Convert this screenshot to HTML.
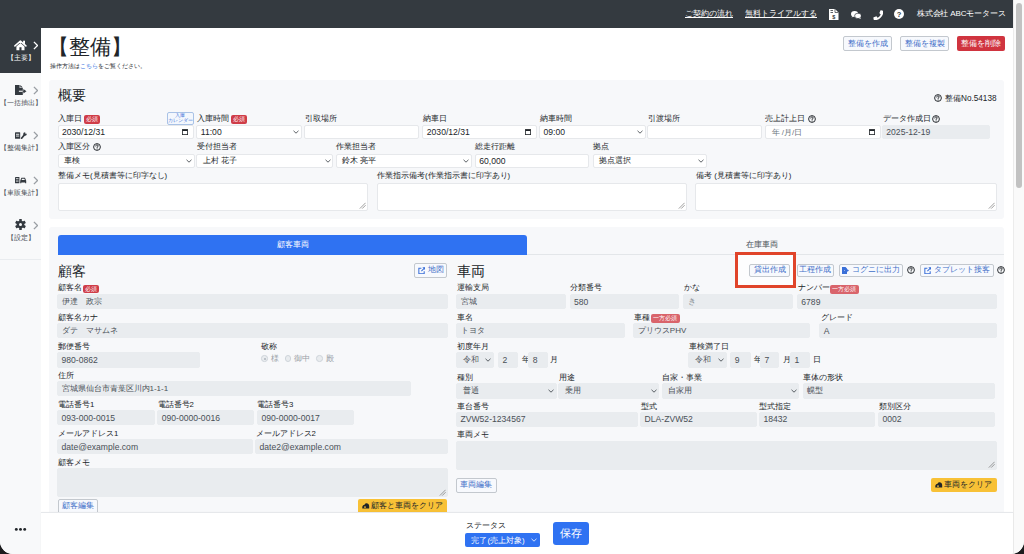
<!DOCTYPE html><html><head><meta charset="utf-8"><style>
*{box-sizing:border-box;margin:0;padding:0}
html,body{width:1024px;height:554px;overflow:hidden;background:#1c1c1e}
body{font-family:"Liberation Sans",sans-serif;color:#212529;position:relative}
#win{position:absolute;left:0;top:0;width:1024px;height:554px;background:#fff;overflow:hidden;border-radius:0 0 13px 13px}
.a{position:absolute}
.lbl{position:absolute;font-size:7.8px;line-height:8px;white-space:nowrap;color:#212529}
.inp{position:absolute;background:#fff;border:0.8px solid #e6e8eb;border-radius:2px;font-size:8.6px;color:#212529;padding-left:3.5px;display:flex;align-items:center;white-space:nowrap;overflow:hidden}
.dis{background:#e9ecef;border-color:#e9ecef;color:#495057}
.chev{position:absolute;right:1.8px;top:50%;margin-top:-2px}
.cal{position:absolute;right:5px;top:50%;margin-top:-3px}
.grip{position:absolute;right:0.5px;bottom:0.5px}
.badge{position:absolute;background:#cf3d48;color:#fff;font-size:5.5px;line-height:8.5px;height:8.5px;border-radius:2px;text-align:center;white-space:nowrap}
.qm{position:absolute;width:7px;height:7px;border:1px solid #212529;border-radius:50%;font-size:5.5px;line-height:5.5px;text-align:center;font-weight:bold;color:#212529}
.btno{position:absolute;border:1px solid #c3c8ce;background:#f7f9fd;color:#3f6fc8;font-size:7.6px;display:flex;align-items:center;justify-content:center;white-space:nowrap;border-radius:2px}
.card{position:absolute;background:#f7f8fa;border-radius:3px}
.side{position:absolute;font-size:7px;color:#4a5056;white-space:nowrap;text-align:center}
</style></head><body><div id="win">
<div class="a" style="left:0;top:0;width:1013px;height:28px;background:#343a40"></div>
<div class="a" style="left:685px;top:9px;font-size:8px;line-height:9px;color:#fff;text-decoration:underline;white-space:nowrap">ご契約の流れ</div>
<div class="a" style="left:745px;top:9px;font-size:8px;line-height:9px;color:#fff;text-decoration:underline;white-space:nowrap">無料トライアルする</div>
<svg class="a" style="left:829px;top:9px" width="9.5" height="11" viewBox="0 0 9.5 11"><path d="M0 0 H6 L9.5 3.5 V11 H0 Z" fill="#fff"/><path d="M6 0 V3.5 H9.5" fill="none" stroke="#343a40" stroke-width="0.7"/><rect x="1.5" y="1.2" width="2.5" height="0.8" fill="#343a40"/><rect x="1.5" y="3" width="2.5" height="0.8" fill="#343a40"/><text x="4.8" y="9.6" font-size="5.5" text-anchor="middle" fill="#343a40" font-family="Liberation Sans" font-weight="bold">$</text></svg>
<svg class="a" style="left:850.5px;top:11px" width="10.5" height="8" viewBox="0 0 10.5 8"><ellipse cx="3.6" cy="3" rx="3.6" ry="2.9" fill="#fff"/><path d="M1.2 5.2 L0.6 6.6 L2.6 5.6 Z" fill="#fff"/><ellipse cx="7" cy="4.9" rx="3.4" ry="2.7" fill="#fff" stroke="#343a40" stroke-width="0.7"/><path d="M9.2 6.8 L10 8 L8 7.3 Z" fill="#fff"/></svg>
<svg class="a" style="left:872.5px;top:9.8px" width="10.5" height="10.5" viewBox="0 0 11 11"><g transform="translate(11,0) scale(-1,1)"><path d="M10.2 7.6 L8 6.7 C7.7 6.6 7.4 6.7 7.2 6.9 L6.3 8 C4.8 7.3 3.6 6.1 2.9 4.6 L4 3.7 C4.2 3.5 4.3 3.2 4.2 2.9 L3.3 0.7 C3.1 0.4 2.8 0.2 2.5 0.3 L0.6 0.8 C0.3 0.8 0.1 1.1 0.1 1.4 C0.1 6.4 4.5 10.8 9.5 10.8 C9.8 10.8 10.1 10.6 10.2 10.3 L10.6 8.4 C10.7 8 10.5 7.7 10.2 7.6 Z" fill="#fff"/></g></svg>
<svg class="a" style="left:894px;top:9px" width="10" height="10" viewBox="0 0 10 10"><circle cx="5" cy="5" r="5" fill="#fff"/><text x="5" y="8" font-size="7.5" text-anchor="middle" fill="#343a40" font-family="Liberation Sans" font-weight="bold">?</text></svg>
<div class="a" style="left:917px;top:9.3px;font-size:8px;line-height:9px;color:#fff;white-space:nowrap;letter-spacing:-0.18px">株式会社 ABCモータース</div>
<div class="a" style="left:1013px;top:0;width:11px;height:554px;background:#fafafa;border-left:1px solid #ececec"></div>
<div class="a" style="left:1016px;top:3px;width:6px;height:185px;background:#c2c2c2;border-radius:3px"></div>
<div class="a" style="left:0;top:28px;width:41px;height:526px;background:#f8f9fa"></div>
<div class="a" style="left:0;top:28px;width:41px;height:44.5px;background:#343a40"></div>
<div class="a" style="left:0;top:259px;width:41px;height:1px;background:#e9ecef"></div>
<svg class="a" style="left:14px;top:39.5px" width="13" height="11" viewBox="0 0 13 11"><polyline points="0.9,5.9 6.4,1.1 11.9,5.9" fill="none" stroke="#fff" stroke-width="1.5" stroke-linecap="round" stroke-linejoin="round"/><rect x="9.1" y="0.7" width="1.9" height="3.2" fill="#fff"/><path d="M2.4 6.5 L6.4 3.1 L10.5 6.5 V10.3 H7.5 V7.3 H5.4 V10.3 H2.4 Z" fill="#fff"/></svg>
<svg class="a" style="left:32.6px;top:41px" width="5.5" height="9" viewBox="0 0 5.5 9"><polyline points="0.9,0.9 4.5,4.5 0.9,8.1" fill="none" stroke="#fff" stroke-width="1.3"/></svg>
<div class="side" style="left:0px;top:54px;width:41px;color:#fff;line-height:7px">【主要】</div>
<svg class="a" style="left:14.5px;top:84.9px" width="12" height="10" viewBox="0 0 12 10"><path d="M0 0 H4.6 V3.1 H7.8 V10 H0 Z" fill="#343a40"/><path d="M5.3 0 L7.8 2.5 H5.3 Z" fill="#343a40"/><rect x="3.9" y="5.7" width="3.9" height="1.1" fill="#f8f9fa"/><rect x="7.8" y="5.7" width="1.3" height="1.1" fill="#343a40"/><path d="M8.4 4.1 L11.5 6.25 L8.4 8.4 Z" fill="#343a40"/></svg>
<svg class="a" style="left:32.6px;top:86px" width="5.5" height="9" viewBox="0 0 5.5 9"><polyline points="0.9,0.9 4.5,4.5 0.9,8.1" fill="none" stroke="#9a9fa4" stroke-width="1.3"/></svg>
<div class="side" style="left:0px;top:99px;width:41px;line-height:7px">【一括抽出】</div>
<svg class="a" style="left:14.5px;top:131.5px" width="12" height="7" viewBox="0 0 12 7"><rect x="0" y="0.3" width="5.2" height="6.5" rx="0.4" fill="#343a40"/><rect x="1" y="1.8" width="3.2" height="0.9" fill="#f8f9fa"/><rect x="1" y="3.6" width="3.2" height="0.9" fill="#f8f9fa"/><line x1="6.6" y1="6.2" x2="9.6" y2="2.6" stroke="#343a40" stroke-width="1.7" stroke-linecap="round"/><circle cx="10" cy="2" r="1.8" fill="#343a40"/><path d="M10.2 0 L12 0 L12 1.6 L10.6 2 Z" fill="#f8f9fa"/></svg>
<svg class="a" style="left:32.6px;top:131px" width="5.5" height="9" viewBox="0 0 5.5 9"><polyline points="0.9,0.9 4.5,4.5 0.9,8.1" fill="none" stroke="#9a9fa4" stroke-width="1.3"/></svg>
<div class="side" style="left:0px;top:144px;width:41px;line-height:7px">【整備集計】</div>
<svg class="a" style="left:14.8px;top:176.5px" width="12" height="7" viewBox="0 0 12 7"><rect x="0" y="0" width="4.4" height="6.3" rx="0.4" fill="#343a40"/><rect x="0.9" y="1.3" width="2.6" height="0.9" fill="#f8f9fa"/><rect x="0.9" y="3.6" width="2.6" height="0.9" fill="#f8f9fa"/><path d="M5.2 6.3 V3.8 L6.2 1.2 C6.3 0.9 6.5 0.8 6.8 0.8 H9.6 C9.9 0.8 10.1 0.9 10.2 1.2 L11.2 3.8 V6.3 H10.1 V5.6 H6.3 V6.3 Z" fill="#343a40"/><path d="M6.5 3.1 L7.1 1.7 H9.3 L9.9 3.1 Z" fill="#f8f9fa"/></svg>
<svg class="a" style="left:32.6px;top:176px" width="5.5" height="9" viewBox="0 0 5.5 9"><polyline points="0.9,0.9 4.5,4.5 0.9,8.1" fill="none" stroke="#9a9fa4" stroke-width="1.3"/></svg>
<div class="side" style="left:0px;top:189px;width:41px;line-height:7px">【車販集計】</div>
<svg class="a" style="left:15px;top:219px" width="11" height="11" viewBox="-5.5 -5.5 11 11"><g fill="#343a40"><circle r="3.8"/><rect x="-1.3" y="-5.5" width="2.6" height="11" rx="0.5"/><rect x="-1.3" y="-5.5" width="2.6" height="11" rx="0.5" transform="rotate(60)"/><rect x="-1.3" y="-5.5" width="2.6" height="11" rx="0.5" transform="rotate(120)"/></g><circle r="1.5" fill="#f8f9fa"/></svg>
<svg class="a" style="left:32.6px;top:221px" width="5.5" height="9" viewBox="0 0 5.5 9"><polyline points="0.9,0.9 4.5,4.5 0.9,8.1" fill="none" stroke="#9a9fa4" stroke-width="1.3"/></svg>
<div class="side" style="left:0px;top:234px;width:41px;line-height:7px">【設定】</div>
<svg class="a" style="left:14px;top:526.8px" width="13" height="5" viewBox="0 0 13 5"><circle cx="2.3" cy="2.4" r="1.45" fill="#212529"/><circle cx="6.5" cy="2.4" r="1.45" fill="#212529"/><circle cx="10.7" cy="2.4" r="1.45" fill="#212529"/></svg>
<div class="a" style="left:48px;top:34px;font-size:20.5px;line-height:25px;white-space:nowrap;color:#212529">【整備】</div>
<div class="a" style="left:49.5px;top:62px;font-size:6.4px;line-height:8px;white-space:nowrap;color:#212529">操作方法は<span style="color:#2f6fe0">こちら</span>をご覧ください。</div>
<div class="btno" style="left:843px;top:36px;width:49px;height:15px">整備を作成</div>
<div class="btno" style="left:900px;top:36px;width:49px;height:15px">整備を複製</div>
<div class="a" style="left:957px;top:36px;width:48px;height:15px;background:#d0343f;color:#fff;font-size:7.6px;display:flex;align-items:center;justify-content:center;border-radius:2px;white-space:nowrap">整備を削除</div>
<div class="card" style="left:49px;top:80px;width:955px;height:139px"></div>
<div class="a" style="left:58px;top:87px;font-size:14px;line-height:17px;white-space:nowrap">概要</div>
<svg class="a" style="left:933.7px;top:93.7px" width="8" height="8" viewBox="0 0 8 8"><circle cx="4" cy="4" r="3.4" fill="none" stroke="#212529" stroke-width="0.95"/><path d="M2.75 3.05 C2.75 2.3 3.3 1.9 4 1.9 C4.75 1.9 5.25 2.35 5.25 2.95 C5.25 3.65 4.45 3.8 4.1 4.3 V4.75" fill="none" stroke="#212529" stroke-width="0.95" stroke-linecap="round"/><circle cx="4.1" cy="5.95" r="0.55" fill="#212529"/></svg>
<div class="a" style="left:945px;top:94px;font-size:8.2px;line-height:9px;white-space:nowrap">整備No.54138</div>
<div class="lbl" style="left:58px;top:114.5px;">入庫日</div>
<div class="badge" style="left:83.5px;top:115px;width:16px">必須</div>
<div class="btno" style="left:166.6px;top:112px;width:27.5px;height:12.7px;font-size:5.3px;line-height:5.2px;flex-direction:column;color:#3a6fd8;border-color:#a9c2e6;background:#f3f7fd"><span>入庫</span><span>カレンダー</span></div>
<div class="inp" style="left:57.5px;top:125.3px;width:136.8px;height:13.500000000000014px;">2030/12/31<svg class="cal" width="6" height="6" viewBox="0 0 6 6"><rect x="0.4" y="0.6" width="5.2" height="5" fill="none" stroke="#212529" stroke-width="0.8"/><rect x="0.4" y="0.6" width="5.2" height="1.4" fill="#212529"/></svg></div>
<div class="lbl" style="left:197px;top:114.5px;">入庫時間</div>
<div class="badge" style="left:230.5px;top:115px;width:16px">必須</div>
<div class="inp" style="left:196.3px;top:125.3px;width:105.69999999999999px;height:13.500000000000014px;">11:00<svg class="chev" width="6" height="4" viewBox="0 0 6 4"><polyline points="0.5,0.8 3,3.2 5.5,0.8" fill="none" stroke="#343a40" stroke-width="0.8"/></svg></div>
<div class="lbl" style="left:304.5px;top:114.5px;">引取場所</div>
<div class="inp" style="left:304.3px;top:125.3px;width:114.69999999999999px;height:13.500000000000014px;"></div>
<div class="lbl" style="left:422.5px;top:114.5px;">納車日</div>
<div class="inp" style="left:422.3px;top:125.3px;width:114.69999999999999px;height:13.500000000000014px;">2030/12/31<svg class="cal" width="6" height="6" viewBox="0 0 6 6"><rect x="0.4" y="0.6" width="5.2" height="5" fill="none" stroke="#212529" stroke-width="0.8"/><rect x="0.4" y="0.6" width="5.2" height="1.4" fill="#212529"/></svg></div>
<div class="lbl" style="left:539.5px;top:114.5px;">納車時間</div>
<div class="inp" style="left:539px;top:125.3px;width:106.79999999999995px;height:13.500000000000014px;">09:00<svg class="chev" width="6" height="4" viewBox="0 0 6 4"><polyline points="0.5,0.8 3,3.2 5.5,0.8" fill="none" stroke="#343a40" stroke-width="0.8"/></svg></div>
<div class="lbl" style="left:647.5px;top:114.5px;">引渡場所</div>
<div class="inp" style="left:647px;top:125.3px;width:115px;height:13.500000000000014px;"></div>
<div class="lbl" style="left:765px;top:114.5px;">売上計上日</div>
<svg class="a" style="left:807.7px;top:114.7px" width="8" height="8" viewBox="0 0 8 8"><circle cx="4" cy="4" r="3.4" fill="none" stroke="#212529" stroke-width="0.95"/><path d="M2.75 3.05 C2.75 2.3 3.3 1.9 4 1.9 C4.75 1.9 5.25 2.35 5.25 2.95 C5.25 3.65 4.45 3.8 4.1 4.3 V4.75" fill="none" stroke="#212529" stroke-width="0.95" stroke-linecap="round"/><circle cx="4.1" cy="5.95" r="0.55" fill="#212529"/></svg>
<div class="inp" style="left:764.5px;top:125.3px;width:116.0px;height:13.500000000000014px;padding-left:6px"><span style="color:#6c757d;font-size:8px">年 /月/日</span><svg class="cal" width="6" height="6" viewBox="0 0 6 6"><rect x="0.4" y="0.6" width="5.2" height="5" fill="none" stroke="#212529" stroke-width="0.8"/><rect x="0.4" y="0.6" width="5.2" height="1.4" fill="#212529"/></svg></div>
<div class="lbl" style="left:883px;top:114.5px;">データ作成日</div>
<svg class="a" style="left:931.7px;top:114.7px" width="8" height="8" viewBox="0 0 8 8"><circle cx="4" cy="4" r="3.4" fill="none" stroke="#212529" stroke-width="0.95"/><path d="M2.75 3.05 C2.75 2.3 3.3 1.9 4 1.9 C4.75 1.9 5.25 2.35 5.25 2.95 C5.25 3.65 4.45 3.8 4.1 4.3 V4.75" fill="none" stroke="#212529" stroke-width="0.95" stroke-linecap="round"/><circle cx="4.1" cy="5.95" r="0.55" fill="#212529"/></svg>
<div class="inp dis" style="left:881.8px;top:125.3px;width:108.20000000000005px;height:13.500000000000014px;">2025-12-19</div>
<div class="lbl" style="left:58px;top:143px;">入庫区分</div>
<svg class="a" style="left:92.7px;top:143.2px" width="8" height="8" viewBox="0 0 8 8"><circle cx="4" cy="4" r="3.4" fill="none" stroke="#212529" stroke-width="0.95"/><path d="M2.75 3.05 C2.75 2.3 3.3 1.9 4 1.9 C4.75 1.9 5.25 2.35 5.25 2.95 C5.25 3.65 4.45 3.8 4.1 4.3 V4.75" fill="none" stroke="#212529" stroke-width="0.95" stroke-linecap="round"/><circle cx="4.1" cy="5.95" r="0.55" fill="#212529"/></svg>
<div class="inp" style="left:57.5px;top:153.5px;width:137.0px;height:14.5px;padding-left:5.5px;font-size:8px">車検<svg class="chev" width="6" height="4" viewBox="0 0 6 4"><polyline points="0.5,0.8 3,3.2 5.5,0.8" fill="none" stroke="#343a40" stroke-width="0.8"/></svg></div>
<div class="lbl" style="left:197px;top:143px;">受付担当者</div>
<div class="inp" style="left:196.3px;top:153.5px;width:137.2px;height:14.5px;padding-left:5.5px;font-size:8px">上村 花子<svg class="chev" width="6" height="4" viewBox="0 0 6 4"><polyline points="0.5,0.8 3,3.2 5.5,0.8" fill="none" stroke="#343a40" stroke-width="0.8"/></svg></div>
<div class="lbl" style="left:336px;top:143px;">作業担当者</div>
<div class="inp" style="left:335.5px;top:153.5px;width:136.5px;height:14.5px;padding-left:5.5px;font-size:8px">鈴木 亮平<svg class="chev" width="6" height="4" viewBox="0 0 6 4"><polyline points="0.5,0.8 3,3.2 5.5,0.8" fill="none" stroke="#343a40" stroke-width="0.8"/></svg></div>
<div class="lbl" style="left:475px;top:143px;">総走行距離</div>
<div class="inp" style="left:474.8px;top:153.5px;width:114.19999999999999px;height:14.5px;">60,000</div>
<div class="lbl" style="left:593px;top:143px;">拠点</div>
<div class="inp" style="left:592.5px;top:153.5px;width:114.5px;height:14.5px;padding-left:5.5px;font-size:8px">拠点選択<svg class="chev" width="6" height="4" viewBox="0 0 6 4"><polyline points="0.5,0.8 3,3.2 5.5,0.8" fill="none" stroke="#343a40" stroke-width="0.8"/></svg></div>
<div class="lbl" style="left:58px;top:172px;">整備メモ(見積書等に印字なし)</div>
<div class="inp" style="left:57.5px;top:182.5px;width:310.3px;height:28.0px;"><svg class="grip" width="7" height="7" viewBox="0 0 7 7"><line x1="0.8" y1="6.6" x2="6.6" y2="0.8" stroke="#6a6a6a" stroke-width="0.65"/><line x1="3.2" y1="6.6" x2="6.6" y2="3.2" stroke="#6a6a6a" stroke-width="0.65"/></svg></div>
<div class="lbl" style="left:377px;top:172px;">作業指示備考(作業指示書に印字あり)</div>
<div class="inp" style="left:376.5px;top:182.5px;width:310.0px;height:28.0px;"><svg class="grip" width="7" height="7" viewBox="0 0 7 7"><line x1="0.8" y1="6.6" x2="6.6" y2="0.8" stroke="#6a6a6a" stroke-width="0.65"/><line x1="3.2" y1="6.6" x2="6.6" y2="3.2" stroke="#6a6a6a" stroke-width="0.65"/></svg></div>
<div class="lbl" style="left:696px;top:172px;">備考 (見積書等に印字あり)</div>
<div class="inp" style="left:695.3px;top:182.5px;width:301.5px;height:28.0px;"><svg class="grip" width="7" height="7" viewBox="0 0 7 7"><line x1="0.8" y1="6.6" x2="6.6" y2="0.8" stroke="#6a6a6a" stroke-width="0.65"/><line x1="3.2" y1="6.6" x2="6.6" y2="3.2" stroke="#6a6a6a" stroke-width="0.65"/></svg></div>
<div class="card" style="left:49px;top:227px;width:955px;height:290px"></div>
<div class="a" style="left:58px;top:254.3px;width:946px;height:0.8px;background:#e3e6e9"></div>
<div class="a" style="left:58px;top:235px;width:469px;height:20px;background:#2f72f2;border-radius:3px 3px 0 0;color:#fff;font-size:7.6px;display:flex;align-items:center;justify-content:center">顧客車両</div>
<div class="a" style="left:746px;top:239.5px;font-size:7.6px;line-height:9px;color:#495057;white-space:nowrap">在庫車両</div>
<div class="a" style="left:58px;top:263px;font-size:14px;line-height:17px;white-space:nowrap">顧客</div>
<div class="btno" style="left:414px;top:263.2px;width:33.3px;height:14.5px;font-size:7.6px"><svg width="7.5" height="7.5" viewBox="0 0 8 8" style="margin-right:2.5px"><path d="M3.6 1.4 H0.9 V7.1 H6.6 V4.4" fill="none" stroke="#3a6fd8" stroke-width="1.1"/><path d="M3.6 4.4 L7.2 0.8" fill="none" stroke="#3a6fd8" stroke-width="1.1"/><path d="M4.6 0.3 H7.7 V3.4 Z" fill="#3a6fd8"/></svg>地図</div>
<div class="lbl" style="left:58px;top:284px;">顧客名</div>
<div class="badge" style="left:83px;top:284.5px;width:16px">必須</div>
<div class="inp dis" style="left:57px;top:294px;width:391px;height:15px;font-size:8px;padding-left:3.5px">伊達　政宗</div>
<div class="lbl" style="left:58px;top:313.5px;">顧客名カナ</div>
<div class="inp dis" style="left:57px;top:323px;width:391px;height:15px;font-size:8px;padding-left:3.5px">ダテ　マサムネ</div>
<div class="lbl" style="left:58px;top:342.5px;">郵便番号</div>
<div class="inp dis" style="left:57px;top:352px;width:143px;height:15.699999999999989px;">980-0862</div>
<div class="lbl" style="left:261px;top:342.5px;">敬称</div>
<div class="a" style="left:261px;top:354.5px;font-size:7.8px;line-height:8px;color:#9aa0a6;white-space:nowrap"><span style="display:inline-block;width:6.5px;height:6.5px;border:0.8px solid #ced4da;border-radius:50%;background:#e9ecef;vertical-align:-1px;margin-right:3px;position:relative"><span style="position:absolute;left:1.6px;top:1.6px;width:2.4px;height:2.4px;border-radius:50%;background:#adb5bd"></span></span>様 <span style="display:inline-block;width:6.5px;height:6.5px;border:0.8px solid #ced4da;border-radius:50%;background:#e9ecef;vertical-align:-1px;margin:0 3px 0 4px"></span>御中 <span style="display:inline-block;width:6.5px;height:6.5px;border:0.8px solid #ced4da;border-radius:50%;background:#e9ecef;vertical-align:-1px;margin:0 3px 0 4px"></span>殿</div>
<div class="lbl" style="left:58px;top:371.5px;">住所</div>
<div class="inp dis" style="left:57px;top:381px;width:354px;height:15px;font-size:8px">宮城県仙台市青葉区川内1-1-1</div>
<div class="lbl" style="left:58px;top:401px;">電話番号1</div>
<div class="lbl" style="left:157.5px;top:401px;">電話番号2</div>
<div class="lbl" style="left:257px;top:401px;">電話番号3</div>
<div class="inp dis" style="left:57px;top:410px;width:97.69999999999999px;height:15px;">093-000-0015</div>
<div class="inp dis" style="left:157.2px;top:410px;width:97.10000000000002px;height:15px;">090-0000-0016</div>
<div class="inp dis" style="left:257px;top:410px;width:97px;height:15px;">090-0000-0017</div>
<div class="lbl" style="left:58px;top:430px;">メールアドレス1</div>
<div class="lbl" style="left:255.5px;top:430px;">メールアドレス2</div>
<div class="inp dis" style="left:57px;top:439px;width:195.7px;height:15px;">date@example.com</div>
<div class="inp dis" style="left:255px;top:439px;width:192.5px;height:15px;">date2@example.com</div>
<div class="lbl" style="left:58px;top:459px;">顧客メモ</div>
<div class="inp dis" style="left:57px;top:468px;width:390.5px;height:29px;"><svg class="grip" width="7" height="7" viewBox="0 0 7 7"><line x1="0.8" y1="6.6" x2="6.6" y2="0.8" stroke="#6a6a6a" stroke-width="0.65"/><line x1="3.2" y1="6.6" x2="6.6" y2="3.2" stroke="#6a6a6a" stroke-width="0.65"/></svg></div>
<div class="btno" style="left:57.6px;top:499.2px;width:40.4px;height:14.5px">顧客編集</div>
<div class="a" style="left:358.3px;top:499.2px;width:89px;height:14.5px;background:#f8c136;border-radius:2px;font-size:7.6px;display:flex;align-items:center;justify-content:center;white-space:nowrap;color:#212529"><svg width="7.5" height="6" viewBox="0 0 7.5 6" style="margin-right:1.5px"><path d="M0.3 5.6 L0.3 4 C0.3 2.5 1.5 1.9 2.3 1.9 C2.8 0.8 3.6 0.3 4.5 0.3 C6 0.3 7.2 1.5 7.2 3 V5.6 Z" fill="#212529"/><circle cx="3" cy="4.1" r="0.9" fill="#f8c136"/></svg>顧客と車両をクリア</div>
<div class="a" style="left:457px;top:263px;font-size:14px;line-height:17px;white-space:nowrap">車両</div>
<div class="a" style="left:735px;top:252.3px;width:61.3px;height:36.2px;border:3.4px solid #e0442a;background:#fdfdfe"></div>
<div class="btno" style="left:749px;top:263.7px;width:41.2px;height:13.6px">貸出作成</div>
<div class="btno" style="left:796.5px;top:263.7px;width:37.6px;height:13.6px">工程作成</div>
<div class="btno" style="left:838.7px;top:263.7px;width:64.7px;height:13.6px"><svg width="7" height="7" viewBox="0 0 7 7" style="margin-right:3px"><path d="M0 0 H3.5 L5 1.5 V3 H2.5 V4 H5 V7 H0 Z" fill="#3a6fd8"/><path d="M3 3.1 H5.2 V2 L7 3.5 L5.2 5 V3.9 H3 Z" fill="#3a6fd8"/></svg>コグニに出力</div>
<svg class="a" style="left:906.7px;top:266.2px" width="8" height="8" viewBox="0 0 8 8"><circle cx="4" cy="4" r="3.4" fill="none" stroke="#212529" stroke-width="0.95"/><path d="M2.75 3.05 C2.75 2.3 3.3 1.9 4 1.9 C4.75 1.9 5.25 2.35 5.25 2.95 C5.25 3.65 4.45 3.8 4.1 4.3 V4.75" fill="none" stroke="#212529" stroke-width="0.95" stroke-linecap="round"/><circle cx="4.1" cy="5.95" r="0.55" fill="#212529"/></svg>
<div class="btno" style="left:920px;top:263.7px;width:73.7px;height:13.6px"><svg width="7.5" height="7.5" viewBox="0 0 8 8" style="margin-right:2.5px"><path d="M3.6 1.4 H0.9 V7.1 H6.6 V4.4" fill="none" stroke="#3a6fd8" stroke-width="1.1"/><path d="M3.6 4.4 L7.2 0.8" fill="none" stroke="#3a6fd8" stroke-width="1.1"/><path d="M4.6 0.3 H7.7 V3.4 Z" fill="#3a6fd8"/></svg>タブレット接客</div>
<svg class="a" style="left:996.7px;top:266.2px" width="8" height="8" viewBox="0 0 8 8"><circle cx="4" cy="4" r="3.4" fill="none" stroke="#212529" stroke-width="0.95"/><path d="M2.75 3.05 C2.75 2.3 3.3 1.9 4 1.9 C4.75 1.9 5.25 2.35 5.25 2.95 C5.25 3.65 4.45 3.8 4.1 4.3 V4.75" fill="none" stroke="#212529" stroke-width="0.95" stroke-linecap="round"/><circle cx="4.1" cy="5.95" r="0.55" fill="#212529"/></svg>
<div class="lbl" style="left:457px;top:284px;">運輸支局</div>
<div class="lbl" style="left:570px;top:284px;">分類番号</div>
<div class="lbl" style="left:684px;top:284px;">かな</div>
<div class="lbl" style="left:798px;top:284px;">ナンバー</div>
<div class="badge" style="left:830px;top:285px;width:28.5px;background:#d9646b">一方必須</div>
<div class="inp dis" style="left:456px;top:294px;width:109.79999999999995px;height:15px;font-size:8px">宮城</div>
<div class="inp dis" style="left:569.5px;top:294px;width:109.5px;height:15px;">580</div>
<div class="inp dis" style="left:683.3px;top:294px;width:109.70000000000005px;height:15px;font-size:8px;color:#8a9096">き</div>
<div class="inp dis" style="left:796.8px;top:294px;width:200.0px;height:15px;">6789</div>
<div class="lbl" style="left:457px;top:313.5px;">車名</div>
<div class="lbl" style="left:634px;top:313.5px;">車種</div>
<div class="badge" style="left:651px;top:314px;width:28.5px;background:#d9646b">一方必須</div>
<div class="lbl" style="left:820.5px;top:313.5px;">グレード</div>
<div class="inp dis" style="left:456px;top:323px;width:169px;height:15px;font-size:8px">トヨタ</div>
<div class="inp dis" style="left:633.3px;top:323px;width:177.20000000000005px;height:15px;font-size:8px">プリウスPHV</div>
<div class="inp dis" style="left:819.3px;top:323px;width:177.5px;height:15px;">A</div>
<div class="lbl" style="left:457px;top:342.5px;">初度年月</div>
<div class="lbl" style="left:689px;top:342.5px;">車検満了日</div>
<div class="inp dis" style="left:456px;top:352px;width:37.5px;height:15.699999999999989px;font-size:8px;padding-left:5.5px">令和<svg class="chev" width="6" height="4" viewBox="0 0 6 4"><polyline points="0.5,0.8 3,3.2 5.5,0.8" fill="none" stroke="#343a40" stroke-width="0.8"/></svg></div>
<div class="inp dis" style="left:498px;top:352px;width:19.5px;height:15.699999999999989px;">2</div>
<div class="lbl" style="left:522px;top:356px;">年</div>
<div class="inp dis" style="left:528.3px;top:352px;width:20.0px;height:15.699999999999989px;">8</div>
<div class="lbl" style="left:550px;top:356px;">月</div>
<div class="inp dis" style="left:688.3px;top:352px;width:38.700000000000045px;height:15.699999999999989px;font-size:8px;padding-left:5.5px">令和<svg class="chev" width="6" height="4" viewBox="0 0 6 4"><polyline points="0.5,0.8 3,3.2 5.5,0.8" fill="none" stroke="#343a40" stroke-width="0.8"/></svg></div>
<div class="inp dis" style="left:730.3px;top:352px;width:20.5px;height:15.699999999999989px;">9</div>
<div class="lbl" style="left:754px;top:356px;">年</div>
<div class="inp dis" style="left:760px;top:352px;width:19px;height:15.699999999999989px;">7</div>
<div class="lbl" style="left:782.5px;top:356px;">月</div>
<div class="inp dis" style="left:790px;top:352px;width:20px;height:15.699999999999989px;">1</div>
<div class="lbl" style="left:813px;top:356px;">日</div>
<div class="lbl" style="left:457px;top:373.5px;">種別</div>
<div class="lbl" style="left:559px;top:373.5px;">用途</div>
<div class="lbl" style="left:662px;top:373.5px;">自家・事業</div>
<div class="lbl" style="left:803px;top:373.5px;">車体の形状</div>
<div class="inp dis" style="left:456px;top:383px;width:101px;height:15.5px;font-size:8px;padding-left:5.5px">普通<svg class="chev" width="6" height="4" viewBox="0 0 6 4"><polyline points="0.5,0.8 3,3.2 5.5,0.8" fill="none" stroke="#343a40" stroke-width="0.8"/></svg></div>
<div class="inp dis" style="left:558.3px;top:383px;width:101.20000000000005px;height:15.5px;font-size:8px;padding-left:5.5px">乗用<svg class="chev" width="6" height="4" viewBox="0 0 6 4"><polyline points="0.5,0.8 3,3.2 5.5,0.8" fill="none" stroke="#343a40" stroke-width="0.8"/></svg></div>
<div class="inp dis" style="left:661.5px;top:383px;width:137.79999999999995px;height:15.5px;font-size:8px;padding-left:5.5px">自家用<svg class="chev" width="6" height="4" viewBox="0 0 6 4"><polyline points="0.5,0.8 3,3.2 5.5,0.8" fill="none" stroke="#343a40" stroke-width="0.8"/></svg></div>
<div class="inp dis" style="left:802.5px;top:383px;width:192.5px;height:15.5px;font-size:8px">幌型</div>
<div class="lbl" style="left:457px;top:402.5px;">車台番号</div>
<div class="lbl" style="left:641px;top:402.5px;">型式</div>
<div class="lbl" style="left:759px;top:402.5px;">型式指定</div>
<div class="lbl" style="left:878.5px;top:402.5px;">類別区分</div>
<div class="inp dis" style="left:456px;top:412.2px;width:181.60000000000002px;height:14.600000000000023px;">ZVW52-1234567</div>
<div class="inp dis" style="left:640.1px;top:412.2px;width:116.5px;height:14.600000000000023px;">DLA-ZVW52</div>
<div class="inp dis" style="left:759px;top:412.2px;width:116.39999999999998px;height:14.600000000000023px;">18432</div>
<div class="inp dis" style="left:878px;top:412.2px;width:116.70000000000005px;height:14.600000000000023px;">0002</div>
<div class="lbl" style="left:457px;top:431px;">車両メモ</div>
<div class="inp dis" style="left:456px;top:441.3px;width:540.7px;height:28.30000000000001px;"><svg class="grip" width="7" height="7" viewBox="0 0 7 7"><line x1="0.8" y1="6.6" x2="6.6" y2="0.8" stroke="#6a6a6a" stroke-width="0.65"/><line x1="3.2" y1="6.6" x2="6.6" y2="3.2" stroke="#6a6a6a" stroke-width="0.65"/></svg></div>
<div class="btno" style="left:456px;top:477.7px;width:40.6px;height:15px">車両編集</div>
<div class="a" style="left:931px;top:477.7px;width:65.7px;height:14.6px;background:#f8c136;border-radius:2px;font-size:7.6px;display:flex;align-items:center;justify-content:center;white-space:nowrap;color:#212529"><svg width="7.5" height="6" viewBox="0 0 7.5 6" style="margin-right:1.5px"><path d="M0.3 5.6 L0.3 4 C0.3 2.5 1.5 1.9 2.3 1.9 C2.8 0.8 3.6 0.3 4.5 0.3 C6 0.3 7.2 1.5 7.2 3 V5.6 Z" fill="#212529"/><circle cx="3" cy="4.1" r="0.9" fill="#f8c136"/></svg>車両をクリア</div>
<div class="a" style="left:41px;top:512px;width:972px;height:42px;background:#fff;border-top:1px solid #e6e8eb;box-shadow:0 -0.5px 1.5px rgba(0,0,0,0.06)"></div>
<div class="a" style="left:466px;top:520.5px;font-size:7.8px;line-height:9px;white-space:nowrap">ステータス</div>
<div class="a" style="left:465.4px;top:533.1px;width:74.7px;height:14.3px;background:#2f72f2;border-radius:2px;color:#fff;font-size:8px;display:flex;align-items:center;padding-left:6px;white-space:nowrap">完了(売上対象)<svg style="position:absolute;right:3px;top:5px" width="6" height="4" viewBox="0 0 6 4"><polyline points="0.5,0.8 3,3.2 5.5,0.8" fill="none" stroke="#fff" stroke-width="0.8"/></svg></div>
<div class="a" style="left:553.3px;top:522px;width:35.6px;height:23px;background:#2f72f2;border-radius:3px;color:#fff;font-size:11px;display:flex;align-items:center;justify-content:center;white-space:nowrap">保存</div>
</div></body></html>
